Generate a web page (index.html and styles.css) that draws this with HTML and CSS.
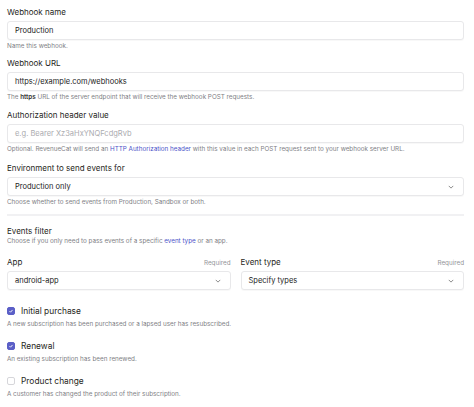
FILE: index.html
```html
<!DOCTYPE html>
<html lang="en">
<head>
<meta charset="utf-8">
<title>Webhook</title>
<link rel="stylesheet" href="styles.css">
</head>
<body>
<form class="form">
  <div class="field f1">
    <label class="label">Webhook name</label>
    <div class="input">Production</div>
    <p class="help">Name this webhook.</p>
  </div>
  <div class="field f2">
    <label class="label">Webhook URL</label>
    <div class="input">https://example.com/webhooks</div>
    <p class="help">The <b>https</b> URL of the server endpoint that will receive the webhook POST requests.</p>
  </div>
  <div class="field f3">
    <label class="label">Authorization header value</label>
    <div class="input placeholder">e.g. Bearer Xz3aHxYNQFcdgRvb</div>
    <p class="help">Optional. RevenueCat will send an <a class="link">HTTP Authorization header</a> with this value in each POST request sent to your webhook server URL.</p>
  </div>
  <div class="field f4">
    <label class="label">Environment to send events for</label>
    <div class="input select"><span>Production only</span><svg class="chev" viewBox="0 0 8 5"><path d="M1 1l3 3 3-3"/></svg></div>
    <p class="help">Choose whether to send events from Production, Sandbox or both.</p>
  </div>
  <hr class="divider">
  <div class="section">
    <h3 class="label">Events filter</h3>
    <p class="help">Choose if you only need to pass events of a specific <a class="link">event type</a> or an app.</p>
  </div>
  <div class="cols">
    <div class="col">
      <div class="colhead"><span class="label">App</span><span class="req">Required</span></div>
      <div class="input select"><span>android-app</span><svg class="chev" viewBox="0 0 8 5"><path d="M1 1l3 3 3-3"/></svg></div>
    </div>
    <div class="col">
      <div class="colhead"><span class="label">Event type</span><span class="req">Required</span></div>
      <div class="input select"><span>Specify types</span><svg class="chev" viewBox="0 0 8 5"><path d="M1 1l3 3 3-3"/></svg></div>
    </div>
  </div>
  <ul class="checks">
    <li class="check">
      <div class="checkrow"><span class="box on"><svg viewBox="0 0 8 8"><path d="M2 4.2l1.4 1.4L6 2.6"/></svg></span><span class="clabel">Initial purchase</span></div>
      <p class="help">A new subscription has been purchased or a lapsed user has resubscribed.</p>
    </li>
    <li class="check">
      <div class="checkrow"><span class="box on"><svg viewBox="0 0 8 8"><path d="M2 4.2l1.4 1.4L6 2.6"/></svg></span><span class="clabel">Renewal</span></div>
      <p class="help">An existing subscription has been renewed.</p>
    </li>
    <li class="check">
      <div class="checkrow"><span class="box"></span><span class="clabel">Product change</span></div>
      <p class="help">A customer has changed the product of their subscription.</p>
    </li>
  </ul>
</form>
</body>
</html>
```
FILE: styles.css
```css
* { box-sizing: border-box; }
html, body { margin: 0; padding: 0; background: #fff; }
body {
  font-family: Inter, "Noto Sans", "Liberation Sans", sans-serif;
  color: #1d1d1f;
  width: 474px;
  height: 407px;
  overflow: hidden;
}
.form {
  padding: 7px 10px 0 7px;
  margin: 0;
}
.field { margin-bottom: 7px; }
.label {
  display: block;
  font-size: 8px;
  line-height: 10px;
  font-weight: 400;
  margin: 0 0 4px;
  color: #1f1f22;
}
.input {
  height: 19px;
  border: 1px solid #e8e8ea;
  border-radius: 3px;
  box-shadow: 0 1px 1px rgba(0,0,0,0.03);
  font-size: 7.5px;
  line-height: 17px;
  padding: 0 7px;
  color: #222;
  font-weight: 400;
  background: #fff;
}
.placeholder { color: #ababaf; }
.select {
  display: flex;
  justify-content: space-between;
  align-items: center;
}
.chev {
  width: 6px;
  height: 4px;
  fill: none;
  stroke: #666;
  stroke-width: 1;
  margin-right: 2px;
}
.help {
  font-size: 6.3px;
  line-height: 9px;
  color: #808085;
  margin: 2px 0 0;
}
.help b { color: #333; font-weight: 600; }
.link { color: #4b53c9; }
.f2 { margin-bottom: 8px; }
.f3 { margin-bottom: 9px; }
.divider {
  border: 0;
  height: 2px;
  background: #f1f1f3;
  margin: 7px 0 0;
}
.section { margin-top: 10px; }
.section .label { margin-bottom: 1px; }
.section .help { margin-top: 0; }
.cols {
  display: grid;
  grid-template-columns: 1fr 1fr;
  gap: 10px;
  margin-top: 11px;
}
.colhead {
  display: flex;
  justify-content: space-between;
  align-items: baseline;
  margin-bottom: 4px;
}
.colhead .label { margin: 0; }
.req { font-size: 6.3px; color: #939398; }
.checks {
  list-style: none;
  margin: 16px 0 0;
  padding: 0;
}
.check { margin-bottom: 12px; }
.checkrow {
  display: flex;
  align-items: center;
  gap: 6px;
  height: 10px;
}
.box {
  width: 8px;
  height: 8px;
  border-radius: 2px;
  border: 1px solid #d6d6da;
  background: #fff;
  display: flex;
}
.box.on { background: #5b5fc7; border-color: #5b5fc7; }
.box svg { width: 100%; height: 100%; fill: none; stroke: #fff; stroke-width: 1.2; }
.clabel { font-size: 8.4px; font-weight: 400; color: #1f1f22; }
.check .help { margin-top: 4px; }
```
